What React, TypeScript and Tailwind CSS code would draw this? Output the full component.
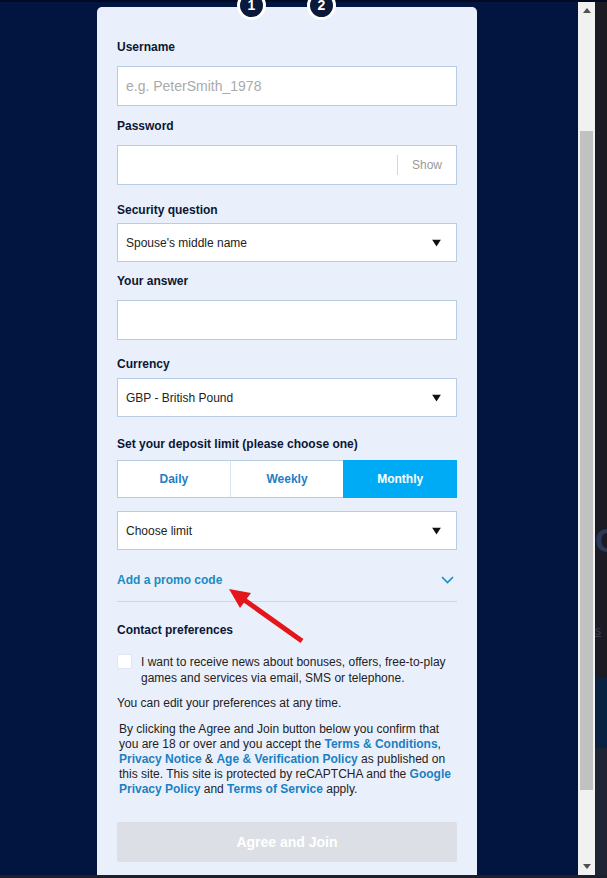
import React from "react";

const labelCls = "block h-[14px] text-[12px] font-bold leading-[16px] text-[#0b1734]";
const inputCls =
  "flex items-center border border-[#b8cce4] bg-white px-[8px] text-[12px] text-[#222]";

const Caret = () => (
  <svg width="9" height="7" viewBox="0 0 9 7" className="absolute right-[15px] top-1/2 -translate-y-1/2">
    <polygon points="0,0 9,0 4.5,7" fill="#111" />
  </svg>
);

const Select = ({ value, className }: { value: string; className: string }) => (
  <div className={`relative h-[39px] ${inputCls} ${className}`}>
    <span>{value}</span>
    <Caret />
  </div>
);

const Link = ({ children }: { children: React.ReactNode }) => (
  <span className="font-bold text-[#1a80c2]">{children}</span>
);

export default function App() {
  return (
    <div className="relative flex h-[878px] w-[607px] flex-col overflow-hidden bg-[#011540] font-['Liberation_Sans',Arial,sans-serif]">
      {/* top strip */}
      <div className="h-[2px] w-full bg-[#000a22]" />

      <div className="flex h-[873px]">
        {/* page area with modal */}
        <div className="w-[578px] pl-[97px] pt-[5px]">
          <div className="relative h-[868px] w-[380px] rounded-t-[5px] bg-[#eaf0fb] px-5 pt-[32px]">
            {/* stepper */}
            <div className="absolute left-[140px] top-[-16px] flex h-[29px] w-[29px] items-center justify-center rounded-full border-[3px] border-white bg-[#0b1a3b] text-[14px] font-bold text-white">
              1
            </div>
            <div className="absolute left-[210px] top-[-16px] flex h-[29px] w-[29px] items-center justify-center rounded-full border-[3px] border-white bg-[#0b1a3b] text-[14px] font-bold text-white">
              2
            </div>

            <label className={labelCls}>Username</label>
            <div className={`mt-[13px] h-[40px] ${inputCls}`}>
              <span className="text-[14px] text-[#aaaaaa]">e.g. PeterSmith_1978</span>
            </div>

            <label className={`mt-[12px] ${labelCls}`}>Password</label>
            <div className={`mt-[13px] h-[40px] justify-end ${inputCls} pr-[14px]`}>
              <div className="mr-[14px] h-[20px] w-px bg-[#d6d6d6]" />
              <span className="text-[#9a9a9a]">Show</span>
            </div>

            <label className={`mt-[17px] ${labelCls}`}>Security question</label>
            <Select value="Spouse's middle name" className="mt-[7px]" />

            <label className={`mt-[11px] ${labelCls}`}>Your answer</label>
            <div className={`mt-[13px] h-[40px] ${inputCls}`} />

            <label className={`mt-[16px] ${labelCls}`}>Currency</label>
            <Select value="GBP - British Pound" className="mt-[8px]" />

            <label className={`mt-[19px] ${labelCls}`}>Set your deposit limit (please choose one)</label>
            <div className="mt-[10px] grid h-[38px] grid-cols-3 border border-[#b8cce4] bg-white text-[12px] font-bold">
              <div className="flex items-center justify-center border-r border-[#dde6f0] text-[#1f7ec8]">Daily</div>
              <div className="flex items-center justify-center text-[#1f7ec8]">Weekly</div>
              <div className="-my-px -mr-px flex items-center justify-center bg-[#00abf5] text-white">Monthly</div>
            </div>

            <Select value="Choose limit" className="mt-[13px]" />

            <div className="mt-[23px] flex h-[14px] items-center justify-between pr-[3px]">
              <span className="text-[12px] font-bold leading-[16px] text-[#1b8bc2]">Add a promo code</span>
              <svg width="13" height="8" viewBox="0 0 13 8">
                <polyline points="1,1 6.5,6.5 12,1" fill="none" stroke="#1b8bc2" strokeWidth="1.6" />
              </svg>
            </div>
            <div className="mt-[14px] border-t border-[#c7d8ec]" />

            <div className={`mt-[20px] ${labelCls}`}>Contact preferences</div>

            <div className="mt-[18px] flex gap-[9px]">
              <div className="h-[15px] w-[15px] shrink-0 rounded-[2px] border border-[#dfe6ef] bg-white" />
              <p className="text-[12px] leading-[16px] text-[#222]">
                I want to receive news about bonuses, offers, free-to-play games and services via email, SMS or
                telephone.
              </p>
            </div>

            <p className="mt-[10px] text-[12px] leading-[14px] text-[#222]">You can edit your preferences at any time.</p>

            <p className="mt-[12px] pl-[2px] text-[12px] leading-[15px] text-[#222]">
              By clicking the Agree and Join button below you confirm that you are 18 or over and you accept the{" "}
              <Link>Terms &amp; Conditions</Link>, <Link>Privacy Notice</Link> &amp;{" "}
              <Link>Age &amp; Verification Policy</Link> as published on this site. This site is protected by reCAPTCHA
              and the <Link>Google Privacy Policy</Link> and <Link>Terms of Service</Link> apply.
            </p>

            <button className="mt-[25px] flex h-[40px] w-full items-center justify-center rounded-[2px] bg-[#dcdfe5] text-[14px] font-bold text-white">
              Agree and Join
            </button>
          </div>
        </div>

        {/* scrollbar */}
        <div className="flex w-[17px] flex-col bg-[#f1f1f1]">
          <div className="flex h-[17px] items-center justify-center">
            <svg width="8" height="5" viewBox="0 0 8 5">
              <polygon points="0,5 8,5 4,0" fill="#505050" />
            </svg>
          </div>
          <div className="mx-[2px] mt-[112px] h-[659px] bg-[#c1c1c1]" />
          <div className="flex-1" />
          <div className="flex h-[17px] items-center justify-center">
            <svg width="8" height="5" viewBox="0 0 8 5">
              <polygon points="0,0 8,0 4,5" fill="#505050" />
            </svg>
          </div>
        </div>

        {/* page behind, right edge */}
        <div className="flex flex-1 flex-col overflow-hidden">
          <div className="h-[676px] bg-[#1c1b23] pt-[520px]">
            <div className="text-[34px] font-bold leading-[36px] text-[#2a3957]">C</div>
            <div className="mt-[64px] text-[12px] text-[#3a3f52] underline">s</div>
          </div>
          <div className="h-[70px] bg-[#0a2142]" />
          <div className="flex-1 bg-[#1f2434]" />
        </div>
      </div>

      {/* bottom strip */}
      <div className="flex-1 bg-[#1d202b]" />

      {/* red annotation arrow */}
      <svg className="pointer-events-none absolute left-0 top-0" width="607" height="878" viewBox="0 0 607 878">
        <line x1="302" y1="641" x2="243" y2="599" stroke="#e3171b" strokeWidth="5" />
        <polygon points="229,589 251,593 240,608" fill="#e3171b" />
      </svg>
    </div>
  );
}
